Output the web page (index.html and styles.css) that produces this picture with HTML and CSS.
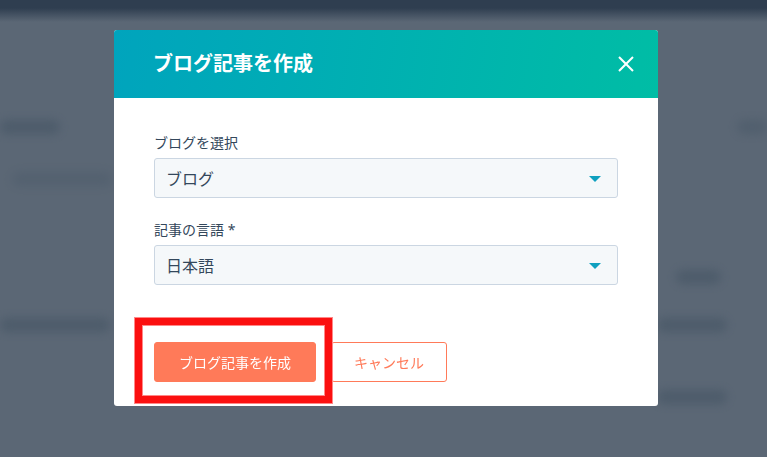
FILE: index.html
```html
<!DOCTYPE html>
<html lang="ja">
<head>
  <meta charset="UTF-8">
  <title>ブログ記事を作成</title>
  <link rel="stylesheet" href="styles.css">
</head>
<body>

  <div class="page">
    <div class="topbar"></div>
    <div class="page-body">
      <div class="row row-a"><span class="blur w60"></span><span class="blur w30 dim"></span></div>
      <div class="row row-b"><span class="blur w100 faint"></span></div>
      <div class="row row-c"><span class="spacer"></span><span class="blur w45"></span></div>
      <div class="row row-d"><span class="blur w110"></span><span class="blur w70"></span></div>
      <div class="row row-e"><span class="spacer"></span><span class="blur w70"></span></div>
    </div>
  </div>

  <div class="modal">
    <header class="modal-header">
      <h1>ブログ記事を作成</h1>
      <button class="close" aria-label="閉じる">
        <svg width="16" height="16" viewBox="0 0 16 16">
          <path d="M1 1 L15 15 M15 1 L1 15" stroke="#fff" stroke-width="2" fill="none"/>
        </svg>
      </button>
    </header>

    <div class="modal-body">
      <label class="field-label">ブログを選択</label>
      <div class="select">
        <span>ブログ</span>
        <i class="caret"></i>
      </div>

      <label class="field-label second">記事の言語 *</label>
      <div class="select">
        <span>日本語</span>
        <i class="caret"></i>
      </div>
    </div>

    <footer class="modal-footer">
      <div class="highlight"></div>
      <button class="btn btn-primary">ブログ記事を作成</button>
      <button class="btn btn-secondary">キャンセル</button>
    </footer>
  </div>

</body>
</html>
```

FILE: styles.css
```css
body {
    margin: 0;
    padding: 0;
    width: 767px;
    height: 457px;
    overflow: hidden;
    background-color: #5b6775;
    font-family: "Noto Sans", "Noto Sans CJK JP", sans-serif;
    color: #33475b;
}

/* blurred page behind the dialog */
.page {
    height: 457px;
}

.topbar {
    height: 22px;
    background: linear-gradient(to bottom, #2f3e50 0, #2f3e50 8px, #5b6775 22px);
}

.page-body {
    display: flex;
    flex-direction: column;
}

.row {
    display: flex;
    justify-content: space-between;
    height: 14px;
}

.row-a { margin-top: 98px; }
.row-b { margin-top: 38px; padding-left: 12px; }
.row-c { margin-top: 84px; padding-right: 46px; }
.row-d { margin-top: 34px; padding-right: 40px; }
.row-e { margin-top: 58px; padding-right: 40px; }

.blur {
    display: block;
    height: 14px;
    background-color: #4b5a69;
    border-radius: 7px;
    filter: blur(5px);
    opacity: 0.85;
}

.blur.dim { opacity: 0.6; }
.blur.faint { opacity: 0.45; }

.w30 { width: 30px; }
.w45 { width: 45px; }
.w60 { width: 60px; }
.w70 { width: 70px; }
.w100 { width: 100px; }
.w110 { width: 110px; }

/* dialog */
.modal {
    position: fixed;
    top: 30px;
    left: 114px;
    width: 544px;
    background-color: #fff;
    border-radius: 3px;
}

.modal-header {
    display: flex;
    justify-content: space-between;
    align-items: center;
    height: 68px;
    padding: 0 24px 0 39px;
    background: linear-gradient(100deg, #00a4bd, #00bda5);
    border-radius: 3px 3px 0 0;
}

.modal-header h1 {
    margin: 0;
    font-size: 20px;
    font-weight: 700;
    color: #fff;
    line-height: 1;
}

.close {
    display: flex;
    padding: 0;
    border: none;
    background: none;
    cursor: pointer;
}

.modal-body {
    display: flex;
    flex-direction: column;
    padding: 35px 40px 0 40px;
}

.field-label {
    font-size: 14px;
    line-height: 20px;
    margin-bottom: 5px;
}

.field-label.second {
    margin-top: 22px;
}

.select {
    display: flex;
    justify-content: space-between;
    align-items: center;
    height: 40px;
    box-sizing: border-box;
    padding: 0 16px 0 11px;
    background-color: #f5f8fa;
    border: 1px solid #cbd6e2;
    border-radius: 3px;
    font-size: 16px;
}

.caret {
    width: 0;
    height: 0;
    margin-top: 1px;
    border-left: 6px solid transparent;
    border-right: 6px solid transparent;
    border-top: 6px solid #0fa0bf;
}

.modal-footer {
    position: relative;
    display: flex;
    gap: 15px;
    padding: 57px 40px 24px 40px;
}

.btn {
    height: 40px;
    box-sizing: border-box;
    border-radius: 3px;
    font-family: "Noto Sans", "Noto Sans CJK JP", sans-serif;
    font-size: 14px;
    cursor: pointer;
}

.btn-primary {
    padding: 0 24px;
    background-color: #ff7a59;
    border: 1px solid #ff7a59;
    color: #fff;
}

.btn-secondary {
    padding: 0 22px;
    background-color: #fff;
    border: 1px solid #ff7a59;
    color: #ff7a59;
}

/* red annotation box */
.highlight {
    position: absolute;
    left: 21px;
    top: 33px;
    width: 197px;
    height: 85px;
    box-sizing: border-box;
    border: 7px solid #fb1010;
    box-shadow: 0 0 0 1px #f88, inset 0 0 0 1px #f88;
}
```
